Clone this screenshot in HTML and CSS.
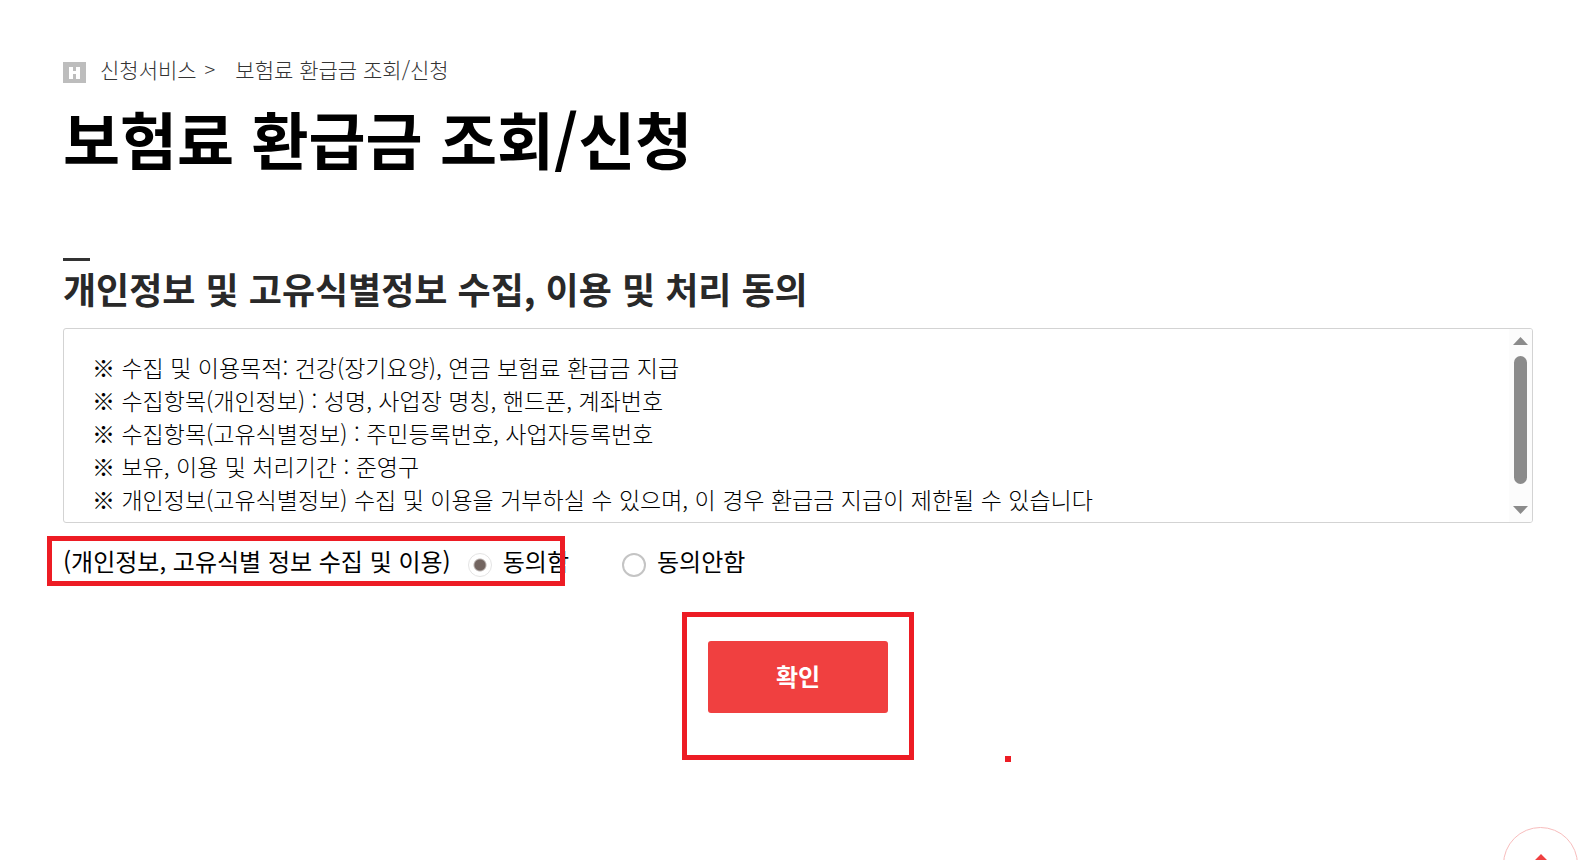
FILE: index.html
```html
<!DOCTYPE html>
<html lang="ko">
<head>
    <meta charset="UTF-8" />
    <meta name="viewport" content="width=device-width, initial-scale=1" />
    <title>보험료 환급금 조회/신청</title>
    <link rel="stylesheet" href="styles.css">
</head>
<body>
    <main class="container">
        <nav class="breadcrumb" aria-label="현재 위치">
            <a href="#" class="home" aria-label="홈">
                <svg width="23" height="21" viewBox="0 0 23 21" aria-hidden="true">
                    <rect width="23" height="21" fill="#bdbdbd" />
                    <path d="M6 5h4v4h3V5h4v12h-4v-5h-3v5H6z" fill="#fff" />
                </svg>
            </a>
            <a href="#">신청서비스</a>
            <span class="sep">&gt;</span>
            <a href="#">보험료 환급금 조회/신청</a>
        </nav>
        <h1>보험료 환급금 조회/신청</h1>

        <form id="agreeForm">
            <h2>개인정보 및 고유식별정보 수집, 이용 및 처리 동의</h2>
            <div class="terms">
                <div class="terms-text" tabindex="0">
                    <p>※ 수집 및 이용목적: 건강(장기요양), 연금 보험료 환급금 지급</p>
                    <p>※ 수집항목(개인정보) : 성명, 사업장 명칭, 핸드폰, 계좌번호</p>
                    <p>※ 수집항목(고유식별정보) : 주민등록번호, 사업자등록번호</p>
                    <p>※ 보유, 이용 및 처리기간 : 준영구</p>
                    <p>※ 개인정보(고유식별정보) 수집 및 이용을 거부하실 수 있으며, 이 경우 환급금 지급이 제한될 수 있습니다</p>
                </div>
                <div class="scrollbar" aria-hidden="true">
                    <svg width="15" height="8" viewBox="0 0 15 8"><path d="M0 8L7.500 0L15 8z" fill="#8b8b8b" /></svg>
                    <span class="thumb"></span>
                    <svg width="15" height="8" viewBox="0 0 15 8"><path d="M0 0h15L7.500 8z" fill="#8b8b8b" /></svg>
                </div>
            </div>

            <div class="agree" role="radiogroup" aria-labelledby="agreeLabel">
                <span id="agreeLabel">(개인정보, 고유식별 정보 수집 및 이용)</span>
                <input type="radio" id="agreeY" name="agree" value="Y" checked>
                <label for="agreeY">동의함</label>
                <input type="radio" id="agreeN" name="agree" value="N">
                <label for="agreeN">동의안함</label>
                <span class="mark mark-agree"></span>
            </div>

            <div class="buttons">
                <div class="confirm">
                    <button type="submit" class="btn-confirm">확인</button>
                    <span class="mark mark-confirm"></span>
                    <span class="mark-dot"></span>
                </div>
            </div>
        </form>
    </main>

    <a href="#" class="btn-top" aria-label="맨 위로">
        <svg width="24" height="24" viewBox="0 0 24 24" aria-hidden="true">
            <path d="M12 0L24 12l-4 4-8-8-8 8-4-4z" fill="#ef4041" />
        </svg>
    </a>
</body>
</html>
```

FILE: styles.css
```css
* {
    box-sizing: border-box;
}
body {
    margin: 0;
    background: #fff;
    color: #000;
    font-family: "Noto Sans CJK KR", sans-serif;
    font-size: 23px;
    font-weight: 300;
    line-height: 33px;
}
a {
    color: inherit;
    text-decoration: none;
}
.container {
    min-height: 100vh;
    padding: 53px 63px 64px;
}

/* 현재 위치 */
.breadcrumb {
    display: flex;
    align-items: center;
    font-size: 21px;
    line-height: 32px;
    color: #333;
}
.home {
    display: flex;
    margin-right: 14px;
    padding-top: 6px;
}
.sep {
    margin: 0 20px 0 8px;
    font-size: 20px;
}
h1 {
    margin: 9px 0 0;
    font-size: 62px;
    font-weight: 700;
    line-height: 88px;
}

/* 약관 동의 */
h2 {
    margin: 76px 0 13px;
    color: #292929;
    font-size: 36px;
    font-weight: 700;
    line-height: 54px;
}
h2::before {
    content: "";
    display: block;
    width: 27px;
    height: 3px;
    background: #333;
}
.terms {
    display: flex;
    height: 195px;
    border: 1px solid #d3d3d3;
    border-radius: 3px;
    overflow: hidden;
}
.terms-text {
    flex: 1;
    padding: 22px 28px;
    overflow-y: auto;
    scrollbar-width: none;
}
.terms p {
    margin: 0;
}
.scrollbar {
    display: flex;
    flex-direction: column;
    align-items: center;
    width: 23px;
    padding: 8px 0;
    background: #fcfcfc;
}
.scrollbar .thumb {
    width: 13px;
    height: 128px;
    margin: 11px 0 auto;
    border-radius: 7px;
    background: #8b8b8b;
}
.agree {
    position: relative;
    display: flex;
    align-items: center;
    margin-top: 20px;
    font-size: 24px;
    font-weight: 400;
    line-height: 36px;
}
.agree input {
    appearance: none;
    width: 24px;
    height: 24px;
    margin: 8px 11px 0 17px;
    border: 2px solid #c4c4c4;
    border-radius: 50%;
    background: #fff;
}
.agree input:checked {
    border: 1px solid #e4e4e4;
    background: radial-gradient(circle, #736661 5px, #fff 7px);
}
.agree label + input {
    margin-left: 53px;
}

/* 확인 버튼 */
.buttons {
    display: flex;
    justify-content: center;
    margin-top: 62px;
}
.confirm {
    position: relative;
}
.btn-confirm {
    display: block;
    width: 180px;
    height: 72px;
    padding: 0 0 4px;
    border: none;
    border-radius: 3px;
    background: #f04040;
    color: #fff;
    font-family: inherit;
    font-size: 24px;
    font-weight: 700;
    cursor: pointer;
}

/* 강조 표시 */
.mark {
    position: absolute;
    border: 5px solid #ed1c24;
    pointer-events: none;
}
.mark-agree {
    top: -7px;
    left: -16px;
    width: 518px;
    height: 50px;
}
.mark-confirm {
    top: -29px;
    left: -26px;
    width: 232px;
    height: 148px;
}
.mark-dot {
    position: absolute;
    top: 115px;
    left: 297px;
    width: 6px;
    height: 6px;
    background: #ed1c24;
}

.btn-top {
    position: fixed;
    right: 18px;
    bottom: -42px;
    display: flex;
    justify-content: center;
    width: 75px;
    height: 75px;
    padding-top: 26px;
    border: 1px solid #f7bcbc;
    border-radius: 50%;
    background: #fff;
}
```
